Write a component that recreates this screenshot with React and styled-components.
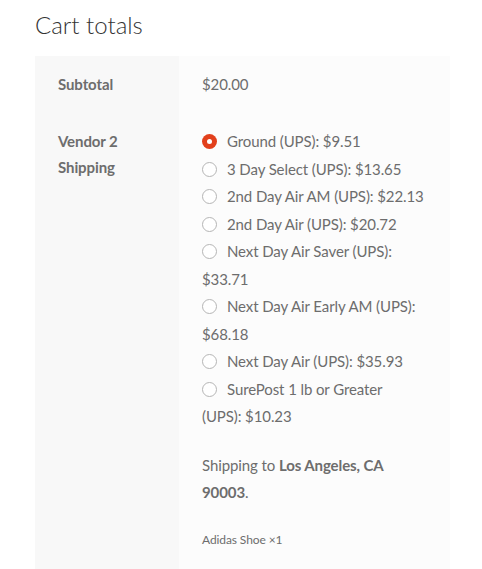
import React from "react";
import styled, { createGlobalStyle } from "styled-components";

const GlobalStyle = createGlobalStyle`
  body {
    margin: 0;
    background: #fff;
    font-family: Lato, "Noto Sans", sans-serif;
    color: #6d6d6d;
  }
`;

const rates = [
  { label: "Ground (UPS):", price: "$9.51", checked: true },
  { label: "3 Day Select (UPS):", price: "$13.65" },
  { label: "2nd Day Air AM (UPS):", price: "$22.13" },
  { label: "2nd Day Air (UPS):", price: "$20.72" },
  { label: "Next Day Air Saver (UPS):", price: "$33.71" },
  { label: "Next Day Air Early AM (UPS):", price: "$68.18" },
  { label: "Next Day Air (UPS):", price: "$35.93" },
  { label: "SurePost 1 lb or Greater (UPS):", price: "$10.23", keep: true },
];

const App = () => {
  return (
    <Page>
      <GlobalStyle />
      <Title>Cart totals</Title>
      <Table>
        <Row>
          <Head>Subtotal</Head>
          <Cell>$20.00</Cell>
        </Row>
        <Row>
          <Head>Vendor 2 Shipping</Head>
          <Cell>
            <RateList>
              {rates.map((r) => (
                <Rate key={r.label}>
                  <Radio checked={r.checked} />
                  {r.label}
                  {r.keep ? "\u00a0" : " "}
                  {r.price}
                </Rate>
              ))}
            </RateList>
            <Destination>
              Shipping to <strong>Los Angeles, CA 90003</strong>.
            </Destination>
            <Items>Adidas Shoe ×1</Items>
          </Cell>
        </Row>
      </Table>
    </Page>
  );
};

const Page = styled.div`
  padding: 9px 32px 0 35px;
`;

const Title = styled.h2`
  margin: 0 0 15px;
  font-size: 24px;
  font-weight: 300;
  color: #333;
  line-height: 32px;
`;

const Table = styled.div`
  width: 415px;
  display: grid;
  grid-template-columns: 144px 1fr;
  font-size: 15px;
  letter-spacing: -0.1px;
`;

const Row = styled.div`
  display: contents;
`;

const Head = styled.div`
  background: #f8f8f8;
  padding: 15px 23px;
  font-weight: 700;
  line-height: 26px;
`;

const Cell = styled.div`
  background: #fcfcfc;
  padding: 15px 23px;
  line-height: 27px;
`;

const RateList = styled.ul`
  list-style: none;
  margin: 0 0 21px;
  padding: 0;
`;

const Rate = styled.li`
  line-height: 27.5px;
`;

const Radio = styled.span`
  display: inline-block;
  box-sizing: border-box;
  width: 15px;
  height: 15px;
  border-radius: 50%;
  vertical-align: -2px;
  margin: 0 10px 0 0;
  background: ${(p) => (p.checked ? "#e2401c" : "#fff")};
  border: ${(p) => (p.checked ? "none" : "1px solid #b5b5b5")};
  position: relative;
  &::after {
    content: "";
    display: ${(p) => (p.checked ? "block" : "none")};
    position: absolute;
    left: 5px;
    top: 5px;
    width: 5px;
    height: 5px;
    border-radius: 50%;
    background: #fff;
  }
`;

const Destination = styled.p`
  margin: 0 0 24px;
  strong {
    font-weight: 700;
  }
`;

const Items = styled.p`
  margin: 0 0 30px;
  font-size: 12px;
  line-height: 20px;
`;

export default App;
